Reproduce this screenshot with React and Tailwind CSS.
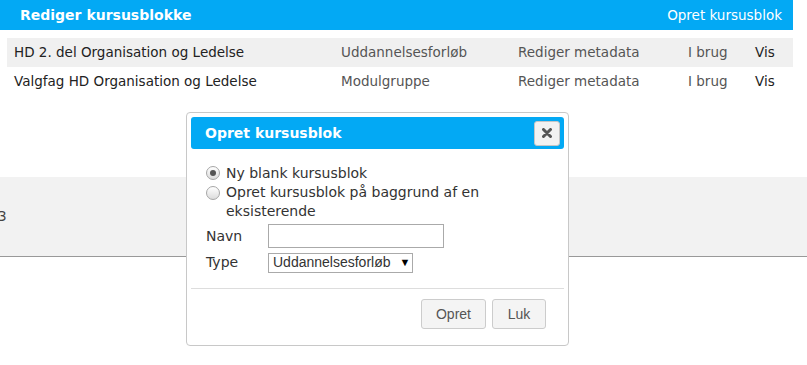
import React from 'react';

const rows = [
  { name: 'HD 2. del Organisation og Ledelse', type: 'Uddannelsesforløb' },
  { name: 'Valgfag HD Organisation og Ledelse', type: 'Modulgruppe' },
];

const Radio = ({ checked }) => (
  <span className="mt-[3px] flex h-[14px] w-[14px] shrink-0 items-center justify-center rounded-full border border-[#a6a6a6] bg-gradient-to-b from-[#ffffff] to-[#dcdcdc]">
    {checked && <span className="h-[6px] w-[6px] rounded-full bg-[#555]" />}
  </span>
);

const App = () => {
  return (
    <div className="relative h-[365px] w-[807px] overflow-hidden bg-white font-['DejaVu_Sans',Verdana,sans-serif] text-[13.5px] text-[#222]">
      <div className="w-[793px]">
        <div className="flex h-[30px] items-center justify-between bg-[#03a9f4] pl-[20px] pr-[11px] text-white">
          <span className="text-[14px] font-bold">Rediger kursusblokke</span>
          <span className="text-[13.5px]">Opret kursusblok</span>
        </div>

        <div className="ml-[7px] mt-[8px]">
          {rows.map((r, i) => (
            <div
              key={r.name}
              className={`grid h-[29px] grid-cols-[327px_177px_170px_67px_1fr] items-center pl-[7px] ${
                i === 0 ? 'bg-[#f0f0f0]' : ''
              }`}
            >
              <span>{r.name}</span>
              <span className="text-[#555]">{r.type}</span>
              <span className="text-[#555]">Rediger metadata</span>
              <span className="text-[#555]">I brug</span>
              <span>Vis</span>
            </div>
          ))}
        </div>
      </div>

      <div className="mt-[81px] flex h-[80px] items-center border-b border-[#999] bg-[#f2f2f2]">
        <span className="-ml-[2px] text-[#444]">3</span>
      </div>

      {/* dialog */}
      <div className="absolute left-[186px] top-[112px] flex h-[234px] w-[383px] flex-col rounded-[4px] border border-[#c8c8c8] bg-white p-[4px]">
        <div className="flex h-[32px] items-center justify-between rounded-[3px] bg-[#03a9f4] pl-[14px] pr-[4px]">
          <span className="text-[14px] font-bold text-white">Opret kursusblok</span>
          <button className="flex h-[25px] w-[26px] items-center justify-center rounded-[3px] border border-[#c6c6c6] bg-[#f2f2f2]">
            <svg width="10" height="10" viewBox="0 0 10 10">
              <path d="M1.5 1.5 L8.5 8.5 M8.5 1.5 L1.5 8.5" stroke="#555" strokeWidth="3" strokeLinecap="round" />
            </svg>
          </button>
        </div>

        <div className="flex flex-col pl-[15px] pt-[14px] text-[14px] text-[#333]">
          <label className="flex gap-[6px] leading-[20px]">
            <Radio checked />
            <span>Ny blank kursusblok</span>
          </label>
          <label className="flex gap-[6px] leading-[19px]">
            <Radio />
            <span className="w-[280px]">Opret kursusblok på baggrund af en eksisterende</span>
          </label>

          <div className="mt-[3px] flex items-center">
            <span className="w-[62px]">Navn</span>
            <div className="h-[24px] w-[176px] border border-[#aaa] bg-white" />
          </div>
          <div className="mt-[4px] flex items-center">
            <span className="w-[62px]">Type</span>
            <div className="flex h-[20px] w-[145px] items-center gap-[9px] whitespace-nowrap border border-[#aaa] bg-white pl-[4px] font-['Liberation_Sans',Arial,sans-serif] text-[14px] text-[#333]">
              <span>Uddannelsesforløb</span>
              <span className="text-[11px] text-black">▼</span>
            </div>
          </div>
        </div>

        <div className="mt-auto border-t border-[#ddd] pb-[12px] pr-[18px] pt-[10px]">
          <div className="flex justify-end gap-[6px] font-['Liberation_Sans',Arial,sans-serif] text-[14px] text-[#555]">
            <button className="h-[30px] w-[65px] rounded-[3px] border border-[#ccc] bg-[#f4f4f4]">Opret</button>
            <button className="h-[30px] w-[54px] rounded-[3px] border border-[#ccc] bg-[#f4f4f4]">Luk</button>
          </div>
        </div>
      </div>
    </div>
  );
};

export default App;
